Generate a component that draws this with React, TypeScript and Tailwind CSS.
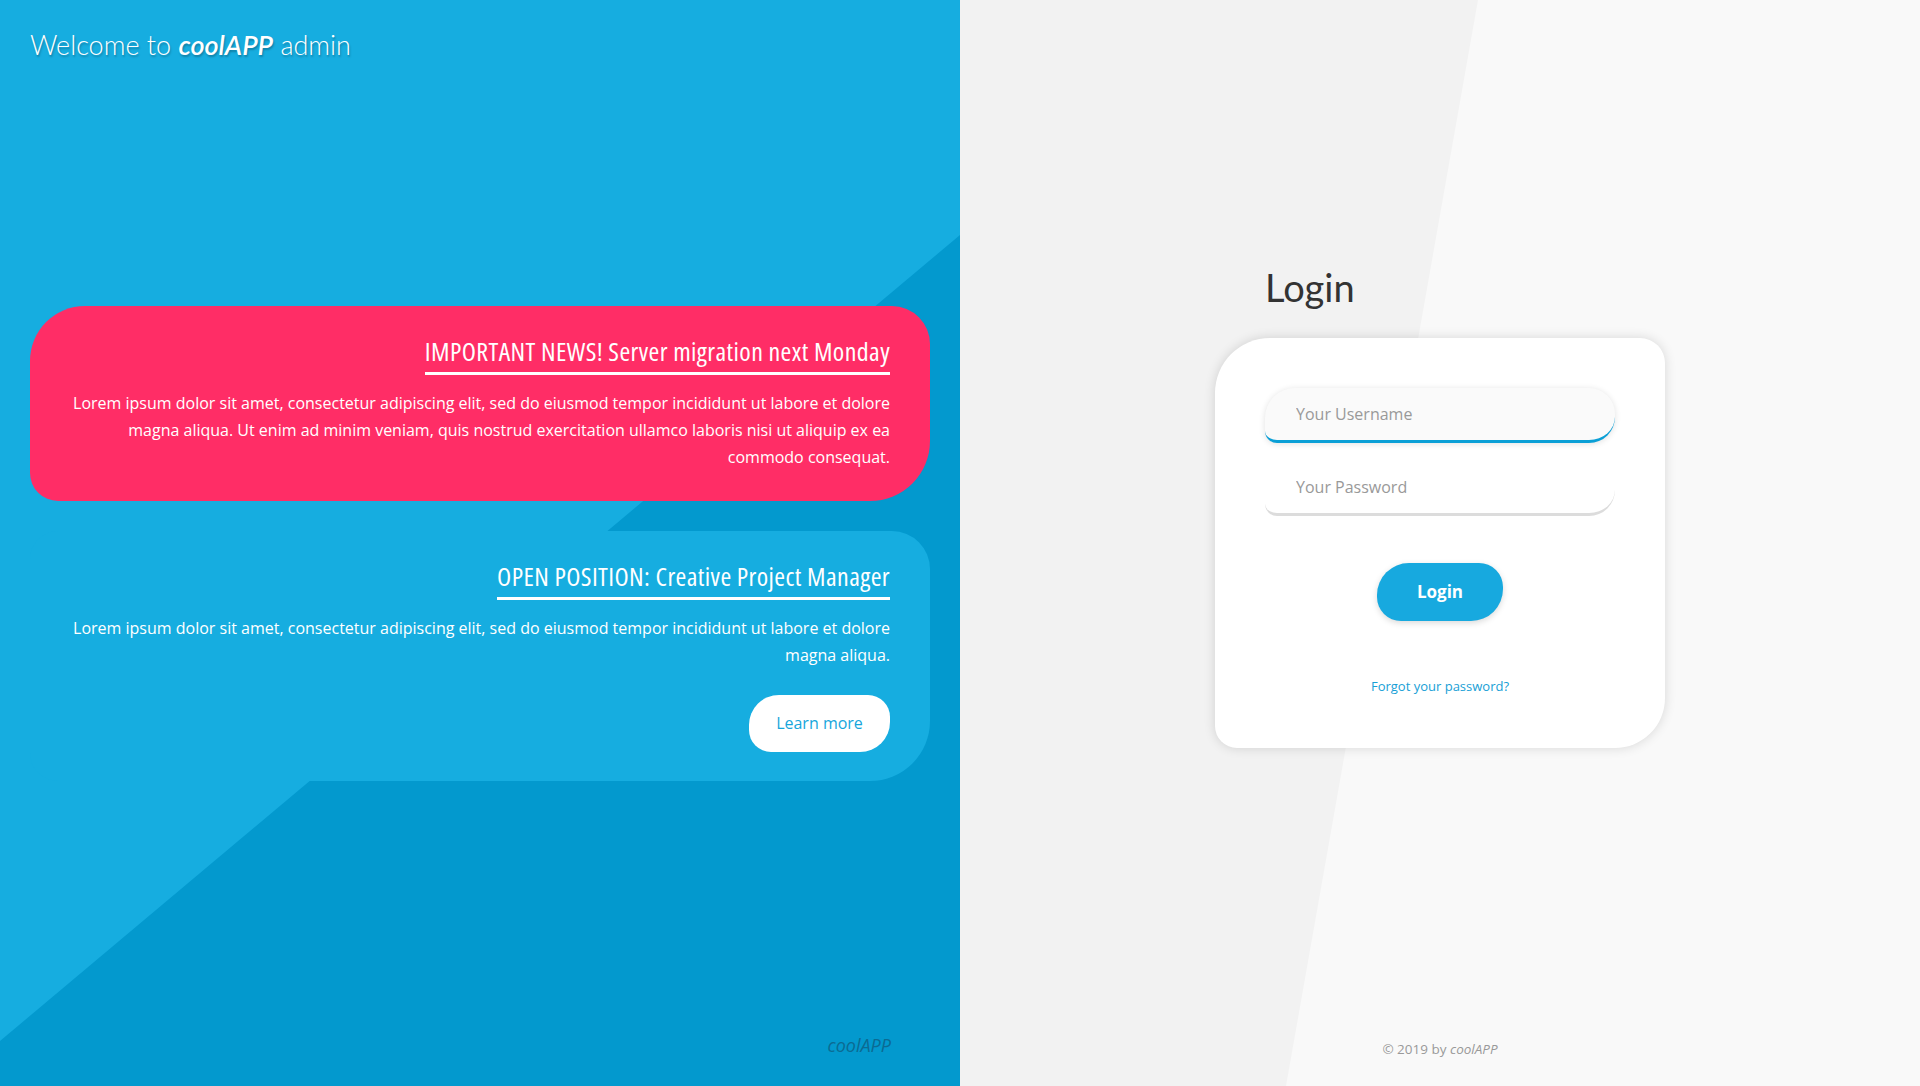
import React from 'react';

const news = [
  {
    title: 'IMPORTANT NEWS! Server migration next Monday',
    body: 'Lorem ipsum dolor sit amet, consectetur adipiscing elit, sed do eiusmod tempor incididunt ut labore et dolore magna aliqua. Ut enim ad minim veniam, quis nostrud exercitation ullamco laboris nisi ut aliquip ex ea commodo consequat.',
    tone: 'pink',
  },
  {
    title: 'OPEN POSITION: Creative Project Manager',
    body: 'Lorem ipsum dolor sit amet, consectetur adipiscing elit, sed do eiusmod tempor incididunt ut labore et dolore magna aliqua.',
    tone: 'blue',
  },
];

const App: React.FC = () => {
  return (
    <div className="flex h-[1086px] w-[1920px] overflow-hidden [font-family:'Open_Sans',sans-serif]">
      {/* Left side: news */}
      <div className="relative flex w-[960px] flex-col bg-[#16ade0]">
        <div className="absolute inset-0 bg-[#0399ce] [clip-path:polygon(100%_235px,100%_100%,0_100%,0_1041px)]" />

        <div className="relative z-10 px-[30px] pt-[26px] text-[27px] font-light leading-[38px] text-white [font-family:Lato,sans-serif] [text-shadow:1px_2px_2px_rgba(0,0,0,0.25)]">
          Welcome to <span className="font-semibold italic">coolAPP</span> admin
        </div>

        <div className="relative z-10 flex flex-1 flex-col justify-center gap-[30px] px-[30px] pb-[64px]">
          {news.map((n, i) => (
            <div
              key={i}
              className={
                n.tone === 'pink'
                  ? 'flex flex-col items-end rounded-tl-[55px] rounded-tr-[38px] rounded-br-[60px] rounded-bl-[28px] bg-[#ff2d66] px-[40px] pt-[30px] pb-[30px] text-right'
                  : 'flex flex-col items-end rounded-tl-[28px] rounded-tr-[38px] rounded-br-[60px] rounded-bl-[28px] bg-[#16ade0] px-[40px] pt-[30px] pb-[29px] text-right'
              }
            >
              <h2 className="border-b-[3px] border-white pb-[6px] text-[26px] leading-[30px] tracking-[0.4px] text-white [font-family:'Open_Sans',sans-serif] [font-stretch:75%]">
                {n.title}
              </h2>
              <p className="mt-[15px] text-[16px] leading-[27px] text-white">{n.body}</p>
              {n.tone === 'blue' && (
                <button className="mt-[26px] h-[57px] w-[141px] rounded-tl-[30px] rounded-tr-[22px] rounded-br-[30px] rounded-bl-[22px] bg-white text-[16px] text-[#16a6dc]">
                  Learn more
                </button>
              )}
            </div>
          ))}
        </div>

        <div className="absolute right-[69px] bottom-[27px] z-10 text-[18px] italic text-[#0b6b93]">
          coolAPP
        </div>
      </div>

      {/* Right side: login */}
      <div className="relative flex w-[960px] flex-col items-center justify-center bg-[#f2f2f2]">
        <div className="absolute inset-0 bg-[#f9f9f9] [clip-path:polygon(518px_0,100%_0,100%_100%,326px_100%)]" />

        <div className="relative z-10 flex w-[450px] flex-col pt-[5px] pb-[78px]">
          <h1 className="mb-[28px] px-[50px] text-[38px] leading-[45px] text-[#333] [font-family:Lato,sans-serif]">Login</h1>
          <div className="flex h-[410px] flex-col items-center rounded-tl-[55px] rounded-tr-[25px] rounded-br-[50px] rounded-bl-[22px] bg-white px-[50px] pt-[50px] shadow-[0_0_12px_rgba(0,0,0,0.14)]">
            <input
              placeholder="Your Username"
              className="h-[55px] w-full rounded-tl-[30px] rounded-tr-[26px] rounded-br-[26px] rounded-bl-[12px] border-b-[3px] border-[#0a9fd6] bg-[#fafafa] px-[31px] text-[16px] text-[#555] shadow-[0_1px_6px_rgba(0,0,0,0.12)] outline-none placeholder:text-[#999]"
            />
            <input
              type="password"
              placeholder="Your Password"
              className="mt-[18px] h-[55px] w-full rounded-tl-[30px] rounded-tr-[26px] rounded-br-[26px] rounded-bl-[12px] border-b-[3px] border-[#dcdcdc] bg-white px-[31px] text-[16px] text-[#555] outline-none placeholder:text-[#999]"
            />
            <button className="mt-[47px] h-[58px] w-[126px] rounded-tl-[32px] rounded-tr-[24px] rounded-br-[32px] rounded-bl-[24px] bg-[#17a9df] text-[17px] font-bold text-white shadow-[0_2px_6px_rgba(0,0,0,0.15)]">
              Login
            </button>
            <a href="#" className="mt-[56px] text-[13px] text-[#17a0d6]">
              Forgot your password?
            </a>
          </div>
        </div>

        <div className="absolute bottom-[27px] left-0 right-0 z-10 text-center text-[13.5px] text-[#999]">
          © 2019 by <span className="italic">coolAPP</span>
        </div>
      </div>
    </div>
  );
};

export default App;
